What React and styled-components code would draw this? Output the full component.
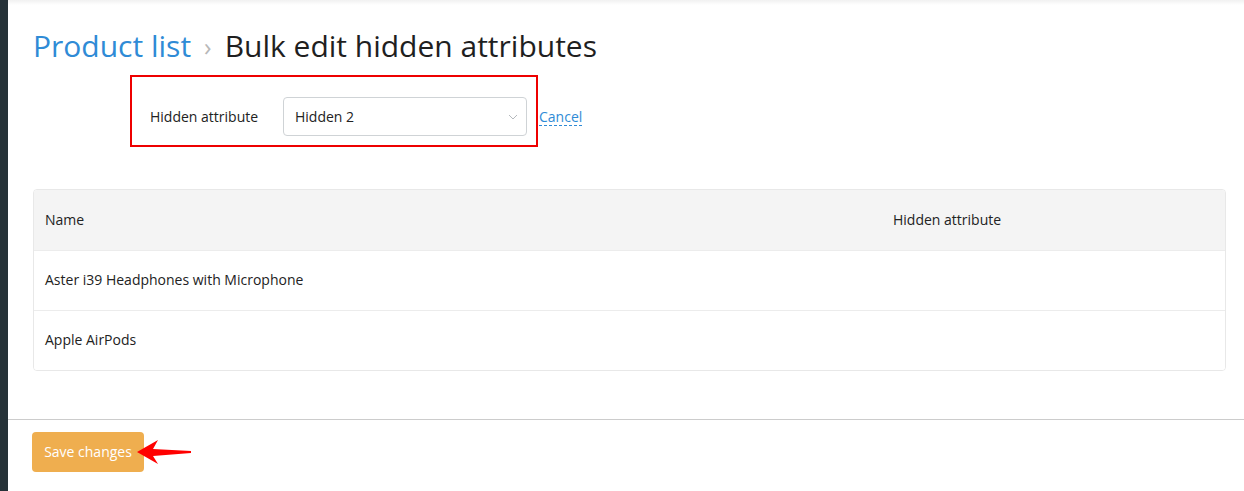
import React from "react";
import styled, { createGlobalStyle } from "styled-components";

const Global = createGlobalStyle`
  html, body { margin: 0; padding: 0; background: #fff; }
  body { font-family: "Open Sans", "Noto Sans", sans-serif; color: #222; }
  * { box-sizing: border-box; }
`;

const Shell = styled.div`
  display: flex;
  width: 1244px;
  height: 491px;
  overflow: hidden;
`;

const Sidebar = styled.div`
  width: 8px;
  flex: none;
  background: #263238;
`;

const Main = styled.main`
  flex: 1;
  display: flex;
  flex-direction: column;
  background: linear-gradient(#f1f1f1 0, #fff 5px);
`;

const Content = styled.div`
  padding: 27px 18px 0 25px;
  display: flex;
  flex-direction: column;
`;

const Title = styled.h1`
  margin: 0;
  font-weight: 400;
  font-size: 30px;
  line-height: 38px;
  display: flex;
  align-items: center;
  gap: 13px;
  color: #1f1f1f;
`;

const Crumb = styled.a`
  color: #2f8bd6;
  text-decoration: none;
`;

const Sep = styled.span`
  color: #b8b8b8;
  font-size: 25px;
`;

const FormRow = styled.div`
  position: relative;
  margin-top: 32px;
  margin-left: 117px;
  display: flex;
  align-items: center;
  height: 39px;
`;

const Annotation = styled.div`
  position: absolute;
  left: -20px;
  top: -22px;
  width: 408px;
  height: 72px;
  border: 2px solid #ee0000;
  pointer-events: none;
`;

const Label = styled.label`
  width: 133px;
  font-size: 14px;
  color: #222;
`;

const Select = styled.div`
  width: 244px;
  height: 39px;
  border: 1px solid #cfd3d6;
  border-radius: 4px;
  display: flex;
  align-items: center;
  justify-content: space-between;
  padding: 0 8px 0 11px;
  font-size: 14px;
  color: #222;
`;

const CancelLink = styled.a`
  margin-left: 12px;
  font-size: 14px;
  color: #2f8bd6;
  text-decoration: none;
  border-bottom: 1px dashed #2f8bd6;
  line-height: 17px;
`;

const Table = styled.div`
  margin-top: 53px;
  border: 1px solid #e8e8e8;
  border-radius: 4px;
  overflow: hidden;
`;

const Row = styled.div`
  display: grid;
  grid-template-columns: 1fr 343px;
  height: 60px;
  padding-bottom: 2px;
  align-items: center;
  background: ${(p) => (p.$head ? "#f4f4f4" : "#fff")};
  border-top: ${(p) => (p.$head ? "none" : "1px solid #ececec")};
  font-size: 14px;
  color: #222;
`;

const Cell = styled.div`
  padding: 0 11px;
`;

const Footer = styled.div`
  margin-top: 48px;
  border-top: 1px solid #cccccc;
  padding: 12px 24px;
  display: flex;
`;

const ButtonWrap = styled.div`
  position: relative;
`;

const SaveButton = styled.button`
  height: 40px;
  width: 112px;
  border: none;
  border-radius: 4px;
  background: #efae4f;
  color: #fff;
  font-family: inherit;
  font-size: 14px;
  padding: 0 0 2px;
`;

const Arrow = styled.svg`
  position: absolute;
  left: 104px;
  top: 6px;
`;

export default function App() {
  return (
    <>
      <Global />
      <Shell>
        <Sidebar />
        <Main>
          <Content>
            <Title>
              <Crumb href="#">Product list</Crumb>
              <Sep>›</Sep>
              <span>Bulk edit hidden attributes</span>
            </Title>
            <FormRow>
              <Annotation />
              <Label>Hidden attribute</Label>
              <Select>
                <span>Hidden 2</span>
                <svg width="10" height="6" viewBox="0 0 10 6">
                  <path d="M1 1 L5 5 L9 1" fill="none" stroke="#b5b9bd" strokeWidth="1" />
                </svg>
              </Select>
              <CancelLink href="#">Cancel</CancelLink>
            </FormRow>
            <Table>
              <Row $head>
                <Cell>Name</Cell>
                <Cell>Hidden attribute</Cell>
              </Row>
              <Row>
                <Cell>Aster i39 Headphones with Microphone</Cell>
                <Cell />
              </Row>
              <Row>
                <Cell>Apple AirPods</Cell>
                <Cell />
              </Row>
            </Table>
          </Content>
          <Footer>
            <ButtonWrap>
              <SaveButton>Save changes</SaveButton>
              <Arrow width="56" height="28" viewBox="0 0 56 28">
                <polygon
                  points="1,14 22,2 17,11 55,13 55,15 17,18 22,26"
                  fill="#ff0000"
                />
              </Arrow>
            </ButtonWrap>
          </Footer>
        </Main>
      </Shell>
    </>
  );
}
